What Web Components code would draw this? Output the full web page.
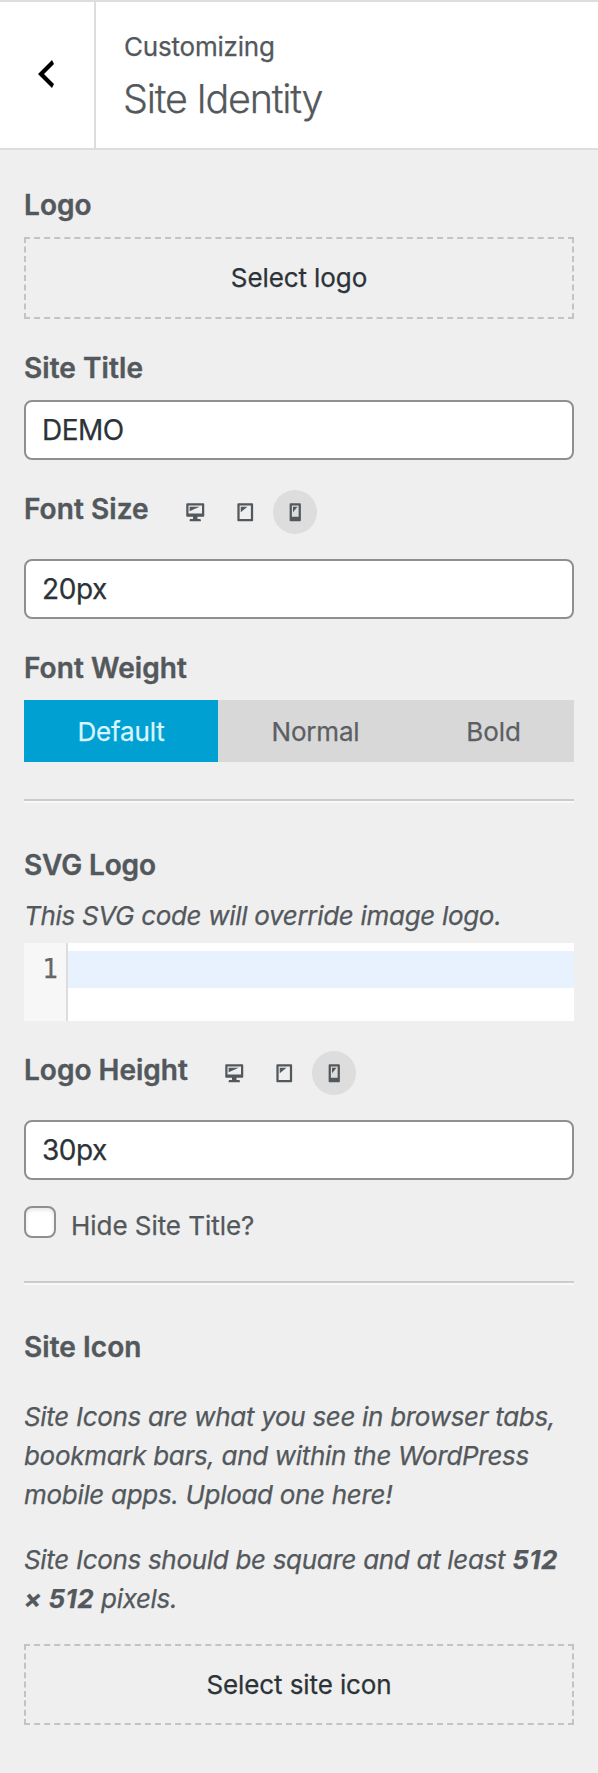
<!DOCTYPE html>
<html lang="en">
<head>
<meta charset="utf-8">
<title>Customizing: Site Identity</title>
<style>
  html, body { margin: 0; }
  body { background: #efefef; color: #53585c; font: 400 26px/39px Inter, "Liberation Sans", sans-serif; -webkit-text-stroke-width: .25px; }
</style>
</head>
<body>
<customizer-panel>
  <panel-header slot="header">
    <span slot="eyebrow">Customizing</span>
    <span slot="title">Site Identity</span>
  </panel-header>

  <panel-control style="--top:37px">
    <span slot="label">Logo</span>
    <upload-button>Select logo</upload-button>
  </panel-control>
  <panel-control style="--top:31px">
    <span slot="label">Site Title</span>
    <text-input value="DEMO" style="letter-spacing:-.5px"></text-input>
  </panel-control>
  <panel-control class="responsive" style="--top:30px">
    <span slot="label">Font Size</span>
    <device-switch slot="tools"></device-switch>
    <text-input value="20px" style="letter-spacing:-.42px"></text-input>
  </panel-control>
  <panel-control style="--top:31px">
    <span slot="label">Font Weight</span>
    <button-group>
      <group-option selected>Default</group-option>
      <group-option>Normal</group-option>
      <group-option style="letter-spacing:-.1px">Bold</group-option>
    </button-group>
  </panel-control>

  <section-rule></section-rule>

  <panel-control style="--top:44px; --gap:8px">
    <span slot="label" style="letter-spacing:-.15px">SVG Logo</span>
    <help-text slot="help" style="margin-top:13px">This SVG code will override image logo.</help-text>
    <code-editor></code-editor>
  </panel-control>
  <panel-control class="responsive" style="--top:30px">
    <span slot="label" style="letter-spacing:0">Logo Height</span>
    <device-switch slot="tools"></device-switch>
    <text-input value="30px" style="letter-spacing:-.5px"></text-input>
  </panel-control>
  <check-option>Hide Site Title?</check-option>

  <section-rule style="--top:43px"></section-rule>

  <panel-control style="--top:44px; --gap:26px">
    <span slot="label">Site Icon</span>
    <help-text slot="help" style="margin-top:32px">Site Icons are what you see in browser tabs,<br>bookmark bars, and within the WordPress<br>mobile apps. Upload one here!</help-text>
    <help-text slot="help" style="margin-top:26px">Site Icons should be square and at least <strong>512<br>× 512</strong> pixels.</help-text>
    <upload-button style="--height:81px">Select site icon</upload-button>
  </panel-control>
</customizer-panel>

<script>
  const define = (name, html, setup) => {
    const template = document.createElement('template');
    template.innerHTML = html;
    customElements.define(name, class extends HTMLElement {
      constructor() {
        super();
        this.attachShadow({ mode: 'open' }).append(template.content.cloneNode(true));
      }
      connectedCallback() { if (setup) setup(this, this.shadowRoot); }
    });
  };

  define('customizer-panel', `
    <style>
      :host { display: block; box-sizing: border-box; min-height: 1773px; background: #efefef; }
      main { display: flex; flex-direction: column; padding: 0 24px; }
    </style>
    <slot name="header"></slot>
    <main><slot></slot></main>`);

  define('panel-header', `
    <style>
      :host { display: flex; box-sizing: border-box; height: 150px; background: #fff; border: solid #ddd; border-width: 2px 0; }
      button { all: unset; box-sizing: border-box; width: 96px; border-right: 2px solid #ddd; display: flex; align-items: center; padding: 0 0 2px 26px; }
      svg { display: block; fill: #000; }
      div { padding: 25px 0 0 28px; display: flex; flex-direction: column; }
      .eyebrow { line-height: 39px; letter-spacing: -.2px; }
      .title { font-size: 39.5px; font-weight: 300; line-height: 48px; letter-spacing: -1.25px; margin: 9px 0 0 -1px; }
    </style>
    <button aria-label="Back"><svg width="40" height="40" viewBox="0 0 20 20"><path d="M14 5l-5 5 5 5-1 2-7-7 7-7z"/></svg></button>
    <div>
      <slot name="eyebrow" class="eyebrow" style="display:block"></slot>
      <slot name="title" class="title" style="display:block"></slot>
    </div>`);

  define('panel-control', `
    <style>
      :host { display: block; margin-top: var(--top); }
      header { display: flex; align-items: flex-start; }
      .label { display: block; font-size: 28px; font-weight: 600; line-height: 36px; letter-spacing: .06px; -webkit-text-stroke-width: .4px; }
      .body { display: block; margin-top: var(--gap, 14px); }
      :host(.responsive) .label { margin-top: 1px; }
      :host(.responsive) .body { margin-top: 25px; }
    </style>
    <header><slot name="label" class="label"></slot><slot name="tools"></slot></header>
    <slot name="help"></slot>
    <slot class="body"></slot>`);

  define('upload-button', `
    <style>
      :host { display: flex; align-items: center; justify-content: center; box-sizing: border-box; height: var(--height, 82px);
        border: 2px dashed #c3c3c3; color: #2c3338; line-height: 38px; letter-spacing: -.1px; }
    </style><slot></slot>`);

  define('text-input', `
    <style>
      :host { display: flex; align-items: center; box-sizing: border-box; height: 60px; padding: 0 0 0 16px;
        border: 2px solid #8f8f8f; border-radius: 8px; background: #fff; color: #2c3338; font-size: 28px; line-height: 56px; letter-spacing: -.1px; }
    </style><span></span>`,
    (host, root) => { root.querySelector('span').textContent = host.getAttribute('value'); });

  define('device-switch', `
    <style>
      :host { display: flex; gap: 6px; margin-left: 24.5px; }
      i { width: 44px; height: 44px; border-radius: 50%; display: flex; align-items: center; justify-content: center; }
      i.on { background: #ddd; }
      svg { display: block; width: 22.5px; height: 22.5px; fill: #53585c; }
    </style>
    <i><svg viewBox="0 0 20 20"><path d="M3 2h14c.55 0 1 .45 1 1v10c0 .55-.45 1-1 1h-5v2h2c.55 0 1 .45 1 1v1H5v-1c0-.55.45-1 1-1h2v-2H3c-.55 0-1-.45-1-1V3c0-.55.45-1 1-1zm13 9V4H4v7h12zM5 5h9L5 9V5z"/></svg></i>
    <i><svg viewBox="0 0 20 20"><path d="M4 2h12c.55 0 1 .45 1 1v14c0 .55-.45 1-1 1H4c-.55 0-1-.45-1-1V3c0-.55.45-1 1-1zm11 14V4H5v12h10zM6 5h6l-6 5V5z"/></svg></i>
    <i class="on"><svg viewBox="0 0 20 20"><path d="M6 2h8c.55 0 1 .45 1 1v14c0 .55-.45 1-1 1H6c-.55 0-1-.45-1-1V3c0-.55.45-1 1-1zm7 12V4H7v10h6zM8 5h4l-4 5V5z"/></svg></i>`);

  define('button-group', `
    <style>:host { display: grid; grid-template-columns: 194px 195px 161px; height: 62px; background: #d8d8d8; }</style>
    <slot></slot>`);

  define('group-option', `
    <style>
      :host { display: flex; align-items: center; justify-content: center; box-sizing: border-box; padding-top: 2px; color: #5b5f63; line-height: 60px; letter-spacing: -.2px; }
      :host([selected]) { background: #00a0d2; color: #d9f5ff; }
    </style><slot></slot>`);

  define('section-rule', `
    <style>
      :host { display: block; height: 2px; margin-top: var(--top, 37px); background: #ccc; border-bottom: 2px solid #f8f8f8; }
    </style>`);

  define('help-text', `
    <style>
      :host { display: block; font-style: italic; line-height: 39px; letter-spacing: -.31px; white-space: nowrap; }
      ::slotted(strong) { font-weight: 700; letter-spacing: .4px; }
    </style><slot></slot>`);

  define('code-editor', `
    <style>
      :host { display: flex; height: 78px; background: #fff; }
      .gutter { box-sizing: border-box; width: 44px; padding: 8px 8px 0 0; border-right: 2px solid #ddd; background: #f7f7f7; color: #666;
        text-align: right; font: 26px/37px "DejaVu Sans Mono", monospace; }
      .code { flex: 1; padding-top: 8px; }
      .line { height: 37px; background: #e8f2ff; }
    </style>
    <div class="gutter">1</div>
    <div class="code"><div class="line"></div></div>`);

  define('check-option', `
    <style>
      :host { display: flex; align-items: flex-start; gap: 15px; margin-top: 26px; height: 32px; }
      .box { box-sizing: border-box; width: 32px; height: 32px; border: 2px solid #8f8f8f; border-radius: 8px; background: #fff; box-shadow: inset 0 2px 4px rgba(0,0,0,.1); }
      .label { display: block; margin-top: 1px; line-height: 37px; letter-spacing: -.05px; }
    </style>
    <span class="box"></span><slot class="label"></slot>`);
</script>
</body>
</html>
